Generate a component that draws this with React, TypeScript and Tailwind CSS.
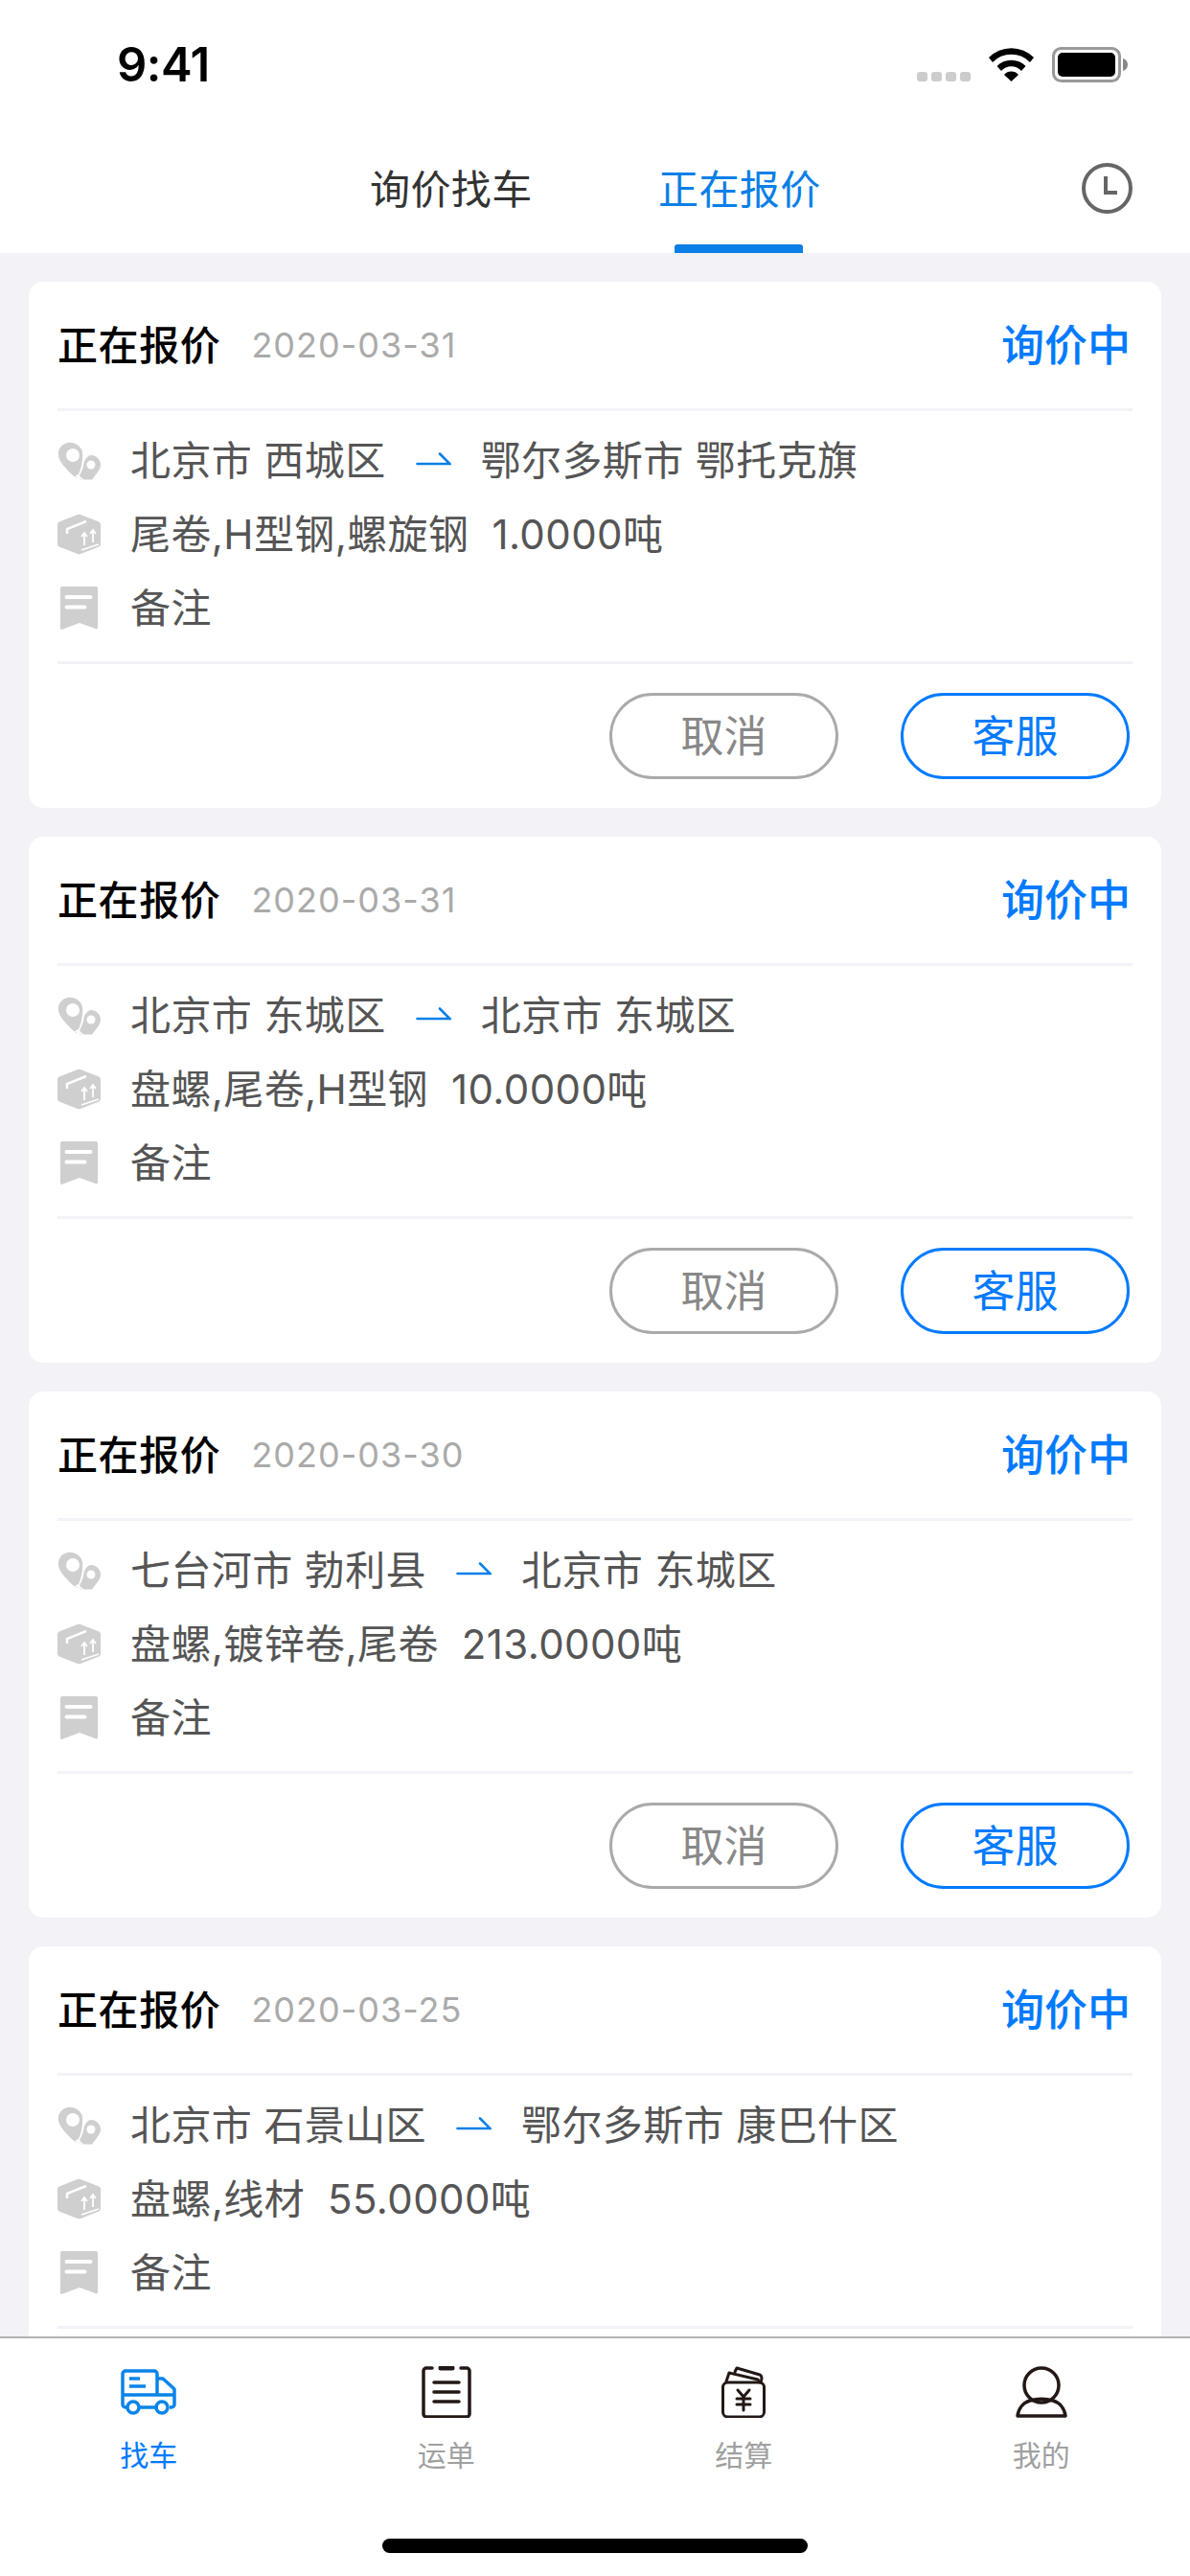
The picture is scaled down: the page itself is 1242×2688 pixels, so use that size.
const orders = [
  { date: "2020-03-31", from: "北京市 西城区", to: "鄂尔多斯市 鄂托克旗", goods: "尾卷,H型钢,螺旋钢", weight: "1.0000吨" },
  { date: "2020-03-31", from: "北京市 东城区", to: "北京市 东城区", goods: "盘螺,尾卷,H型钢", weight: "10.0000吨" },
  { date: "2020-03-30", from: "七台河市 勃利县", to: "北京市 东城区", goods: "盘螺,镀锌卷,尾卷", weight: "213.0000吨" },
  { date: "2020-03-25", from: "北京市 石景山区", to: "鄂尔多斯市 康巴什区", goods: "盘螺,线材", weight: "55.0000吨" },
];

const PinIcon = () => (
  <svg width="45" height="40" viewBox="0 0 45 40" className="shrink-0">
    <path d="M35 14c5.500 0 10 4.500 10 10 0 5-5 10-9 15.500H24l-2-4c3-4 5-8 5.500-13 1-4 4-8.500 7.500-8.500z" fill="#cfcfcf" />
    <circle cx="35" cy="24" r="4.500" fill="#fff" />
    <path d="M13 0C5.800 0 0 5.800 0 13c0 8 10 18 20 26.500C24 33 27 22 27 13 27 5.800 20.200 0 13 0z" fill="#cfcfcf" stroke="#fff" strokeWidth="1.500" />
    <circle cx="16" cy="14" r="7" fill="#fff" />
    <path d="M15 40l6-5 6 5" fill="none" stroke="#fff" strokeWidth="1.500" />
  </svg>
);

const BoxIcon = () => (
  <svg width="45" height="43" viewBox="0 0 45 43" className="shrink-0">
    <path d="M21 1a4 4 0 0 1 3 0l18 7a4 4 0 0 1 3 4v19a4 4 0 0 1-3 4l-18 7a4 4 0 0 1-3 0L3 35a4 4 0 0 1-3-4V12a4 4 0 0 1 3-4z" fill="#cfcfcf" />
    <path d="M10 21v-5l20-8" fill="none" stroke="#fff" strokeWidth="2.500" />
    <path d="M28 33V20m-3 4l3-4 3 4M37 30V17m-3 4l3-4 3 4M25 38l18-6" fill="none" stroke="#fff" strokeWidth="1.800" />
  </svg>
);

const NoteIcon = () => (
  <svg width="45" height="45" viewBox="0 0 45 45" className="shrink-0">
    <path d="M5 0h35a2 2 0 0 1 2 2v41a1.500 1.500 0 0 1-2.500 1L23 38 5.500 44.500A1.500 1.500 0 0 1 3 43V2a2 2 0 0 1 2-2z" fill="#cfcfcf" />
    <path d="M9.500 11h25M9.500 21.500h19" stroke="#fff" strokeWidth="4" strokeLinecap="round" />
  </svg>
);

const RouteArrow = () => (
  <svg width="37" height="14" viewBox="0 0 37 14" className="shrink-0 mx-[31px] -translate-y-[2px]">
    <path d="M1.500 12h34L25 1.500" fill="none" stroke="#0a7fe6" strokeWidth="2.600" strokeLinecap="round" />
  </svg>
);

const Card = ({ order, showActions }: { order: (typeof orders)[number]; showActions: boolean }) => (
  <div className="bg-white rounded-[15px] h-[549px] shrink-0 flex flex-col px-[30px]">
    <div className="h-[135px] flex items-center border-b-[3px] border-[#f2f2f7] shrink-0">
      <span className="text-[42px] font-medium text-black tracking-[0.6px]">正在报价</span>
      <span className="ml-[32px] text-[36px] text-[#aaaaaa] tracking-[1px]">{order.date}</span>
      <span className="ml-auto mr-[2px] pt-[2px] text-[45px] font-medium text-[#007aff]">询价中</span>
    </div>
    <div className="h-[264px] flex flex-col pt-[13px] border-b-[3px] border-[#f2f2f7] shrink-0 text-[42px] text-[#555555] tracking-[0.4px]">
      <div className="h-[77px] flex items-center">
        <div className="w-[76px] shrink-0">
          <PinIcon />
        </div>
        <span>{order.from}</span>
        <RouteArrow />
        <span>{order.to}</span>
      </div>
      <div className="h-[77px] flex items-center">
        <div className="w-[76px] shrink-0">
          <BoxIcon />
        </div>
        <span>{order.goods}</span>
        <span className="ml-[24px]">{order.weight}</span>
      </div>
      <div className="h-[77px] flex items-center">
        <div className="w-[76px] shrink-0">
          <NoteIcon />
        </div>
        <span>备注</span>
      </div>
    </div>
    {/* last card's buttons sit under the tab bar */}
    {showActions && (
      <div className="flex justify-end gap-[65px] pt-[30px] pr-[3px]">
        <button className="w-[239px] h-[90px] pt-[2px] rounded-full border-[3px] border-[#aaaaaa] text-[45px] text-[#888888] flex items-center justify-center">
          取消
        </button>
        <button className="w-[239px] h-[90px] pt-[2px] rounded-full border-[3px] border-[#007aff] text-[45px] text-[#007aff] flex items-center justify-center">
          客服
        </button>
      </div>
    )}
  </div>
);

const TruckIcon = () => (
  <svg width="58" height="50" viewBox="0 0 58 50" fill="none" stroke="#0a84e8" strokeWidth="3.500" strokeLinejoin="round">
    <path d="M7 41H5a3 3 0 0 1-3-3V6a3 3 0 0 1 3-3h30a3 3 0 0 1 3 3v22" />
    <path d="M38 11h6l11 10a2 2 0 0 1 1 2v15a3 3 0 0 1-3 3h-2M19 41h20" />
    <path d="M2 28h54M9 11h11M9 19h17" />
    <circle cx="13" cy="41" r="6" />
    <circle cx="43" cy="41" r="6" />
  </svg>
);

const ListIcon = () => (
  <svg width="52" height="54" viewBox="0 0 52 54" fill="none" stroke="#231815" strokeWidth="3.500" strokeLinecap="round">
    <path d="M11 2H5a3 3 0 0 0-3 3v45a3 3 0 0 0 3 3h42a3 3 0 0 0 3-3V5a3 3 0 0 0-3-3h-6" />
    <path d="M20 2h12" strokeWidth="5" />
    <path d="M13 17h26M13 27h26M13 37h26" />
  </svg>
);

const WalletIcon = () => (
  <svg width="46" height="54" viewBox="0 0 46 54" fill="none" stroke="#231815" strokeWidth="3" strokeLinecap="round" strokeLinejoin="round">
    <rect x="1.500" y="17" width="43" height="36" rx="5" />
    <path d="M5 16l3-9 30 7 2 3" />
    <path d="M14 6l2-4 24 7c2 1 2 2 2 4l-1 4" />
    <path d="M17 25l6 7 6-7M16 34h14M16 40h14M23 32v14" />
  </svg>
);

const UserIcon = () => (
  <svg width="54" height="54" viewBox="0 0 54 54" fill="none" stroke="#231815" strokeWidth="3.500" strokeLinejoin="round">
    <circle cx="27" cy="20" r="18" />
    <path d="M15 36C8 38 3 44 2 52h50c-1-8-6-14-13-16-7-2-17-2-24 0z" />
  </svg>
);

const tabs = [
  { label: "找车", icon: <TruckIcon />, active: true },
  { label: "运单", icon: <ListIcon />, active: false },
  { label: "结算", icon: <WalletIcon />, active: false },
  { label: "我的", icon: <UserIcon />, active: false },
];

export default function App() {
  return (
    <div
      className="w-[1242px] h-[2688px] flex flex-col overflow-hidden bg-[#f2f2f7]"
      style={{ fontFamily: 'Inter, "Noto Sans CJK SC", "Noto Sans", sans-serif' }}
    >
      {/* HEADER */}
      <div className="bg-white h-[264px] shrink-0 flex flex-col">
        <div className="h-[132px] shrink-0 flex items-start justify-between pt-[41px] pl-[122px] pr-[65px]">
          <span className="text-[49px] leading-[54px] font-semibold text-black tracking-[-0.5px]">9:41</span>
          <div className="flex items-start mt-[8px]">
            <div className="flex gap-[4px] mt-[26px] mr-[19px]">
              {[0, 1, 2, 3].map((i) => (
                <div key={i} className="w-[11px] h-[10px] rounded-[3px] bg-[#cccccc]" />
              ))}
            </div>
            <svg width="47" height="36" viewBox="0 0 47 36" className="mr-[19px]">
              <path d="M0 11a33 33 0 0 1 47 0l-4 5a27 27 0 0 0-39 0z" />
              <path d="M8.500 20a21 21 0 0 1 30 0l-4.500 5a14 14 0 0 0-21 0z" />
              <path d="M16 29a10 10 0 0 1 15 0l-7.500 7z" />
            </svg>
            <svg width="79" height="37" viewBox="0 0 79 37">
              <rect x="1.500" y="1.500" width="69" height="34" rx="8" fill="#fff" stroke="#999999" strokeWidth="3" />
              <rect x="6" y="6" width="60" height="25" rx="5" fill="#000" />
              <path d="M74 12c3 1 5 3 5 6.500s-2 5.500-5 6.500z" fill="#888888" />
            </svg>
          </div>
        </div>
        <div className="relative flex-1 flex text-[42px] tracking-[0.4px]">
          <div className="absolute left-[386px] top-[38px] leading-[56px] text-[#333333]">询价找车</div>
          <div className="absolute left-[687px] top-[38px] leading-[56px] text-[#0a7fe6]">正在报价</div>
          <div className="absolute left-[704px] bottom-0 w-[134px] h-[9px] rounded-t-[3px] bg-[#0a7fe6]" />
          <svg width="53" height="53" viewBox="0 0 53 53" fill="none" stroke="#666666" strokeWidth="4" className="absolute left-[1129px] top-[38px]">
            <circle cx="26.500" cy="26.500" r="24.500" />
            <path d="M25 14v17h12" />
          </svg>
        </div>
      </div>

      {/* LIST */}
      <div className="flex-1 min-h-0 overflow-hidden flex flex-col gap-[30px] pt-[30px] px-[30px]">
        {orders.map((order, index) => (
          <Card order={order} showActions={index < 3} key={index} />
        ))}
      </div>

      {/* TAB BAR */}
      <div className="h-[250px] shrink-0 bg-white border-t-2 border-[#b2b2b2] flex flex-col">
        <div className="grid grid-cols-4 pt-[29px]">
          {tabs.map((tab) => (
            <div key={tab.label} className="flex flex-col items-center">
              <div className="h-[54px] flex items-center justify-center">{tab.icon}</div>
              <span className={`mt-[19px] text-[30px] leading-[40px] ${tab.active ? "text-[#007aff]" : "text-[#a0a0a0]"}`}>
                {tab.label}
              </span>
            </div>
          ))}
        </div>
        <div className="mt-[67px] mx-auto w-[444px] h-[15px] rounded-full bg-black" />
      </div>
    </div>
  );
}
